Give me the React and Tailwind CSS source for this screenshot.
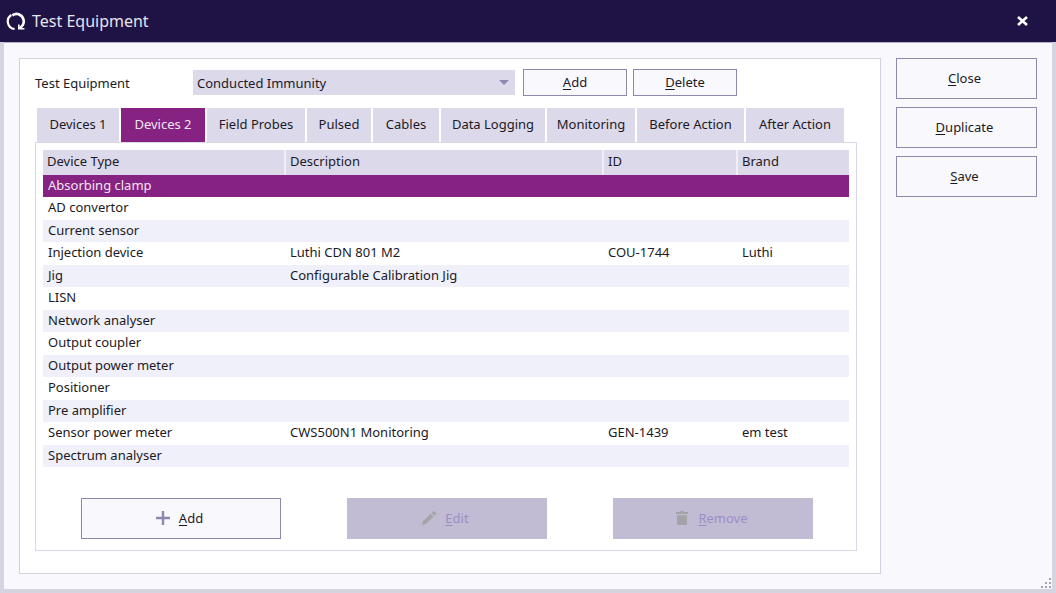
import { useState } from "react";

const tabs = [
  { name: "Devices 1", width: "w-[82px]" },
  { name: "Devices 2", width: "w-[84px]" },
  { name: "Field Probes", width: "w-[98px]" },
  { name: "Pulsed", width: "w-[64px]" },
  { name: "Cables", width: "w-[66px]" },
  { name: "Data Logging", width: "w-[104px]" },
  { name: "Monitoring", width: "w-[88px]" },
  { name: "Before Action", width: "w-[107px]" },
  { name: "After Action", width: "w-[98px]" },
];

const devices = [
  { type: "Absorbing clamp" },
  { type: "AD convertor" },
  { type: "Current sensor" },
  { type: "Injection device", description: "Luthi CDN 801 M2", id: "COU-1744", brand: "Luthi" },
  { type: "Jig", description: "Configurable Calibration Jig" },
  { type: "LISN" },
  { type: "Network analyser" },
  { type: "Output coupler" },
  { type: "Output power meter" },
  { type: "Positioner" },
  { type: "Pre amplifier" },
  { type: "Sensor power meter", description: "CWS500N1 Monitoring", id: "GEN-1439", brand: "em test" },
  { type: "Spectrum analyser" },
];

// Button caption with its access key underlined
function Caption({ text }) {
  return (
    <span>
      <span className="underline underline-offset-2">{text[0]}</span>
      {text.slice(1)}
    </span>
  );
}

function Button({ text, className }) {
  return (
    <button className={`border border-[#8e88ae] bg-[#f8f8fd] pb-0.5 hover:bg-white ${className}`}>
      <Caption text={text} />
    </button>
  );
}

function Logo() {
  return (
    <svg className="h-5 w-5" viewBox="0 0 20 20" fill="none" stroke="#fff">
      <path d="M5.4 4 A7.6 7.6 0 0 0 8.6 18" strokeWidth="2.2" />
      <path d="M6.4 4.4 Q9.4 2.2 12.6 3.2 A7.4 7.4 0 0 1 15.4 15.6 L13.4 17.4" strokeWidth="2.6" />
      <path d="M12.8 13.4 V17.8 H18.4" strokeWidth="1.6" />
    </svg>
  );
}

function PlusIcon() {
  return (
    <svg className="h-4 w-4" viewBox="0 0 16 16" fill="none" stroke="#8e88ae" strokeWidth="2.4">
      <path d="M8 1 V15 M1 8 H15" />
    </svg>
  );
}

function PencilIcon() {
  return (
    <svg className="h-4 w-4" viewBox="0 0 16 16" fill="#a3a3a8">
      <path d="M1 15 L2 11.2 L9.8 3.8 L12.6 6.6 L4.8 14.1 Z" />
      <path d="M10.6 3 L12.3 1.4 Q13 .9 13.7 1.5 L15 2.8 Q15.5 3.5 14.9 4.2 L13.4 5.8 Z" />
    </svg>
  );
}

function TrashIcon() {
  return (
    <svg className="h-4 w-4" viewBox="0 0 16 16" fill="#a3a3a8">
      <path d="M2 2 H6 L6.6 1 H9.4 L10 2 H14 V4 H2 Z" />
      <path d="M3 5.2 H13 V14 Q13 15 12 15 H4 Q3 15 3 14 Z" />
    </svg>
  );
}

export default function App() {
  const [activeTab, setActiveTab] = useState(1);
  const [selected, setSelected] = useState(0);

  return (
    <div className="flex min-h-screen flex-col bg-[#d7d4e2] font-['Noto_Sans','Open_Sans',sans-serif] text-[13px] leading-[18px] text-[#1c1a26]">
      <header className="flex h-[42px] items-center justify-between bg-[#1e1344] pr-7 pl-1.5 text-[#e6e4ee]">
        <div className="flex items-center gap-1.5">
          <Logo />
          <h1 className="text-base">Test Equipment</h1>
        </div>
        <button aria-label="Close window" className="flex h-5 items-center">
          <svg className="h-[10px] w-[11px]" viewBox="0 0 11 10" stroke="#fff" strokeWidth="2.6">
            <path d="M1 1 L10 9 M10 1 L1 9" />
          </svg>
        </button>
      </header>

      <main className="relative mx-1 mb-1 flex flex-1 gap-[15px] border-t border-[#b4b0c6] bg-[#f8f8fd] px-[15px] py-[15px]">
        <section className="flex min-w-0 flex-1 flex-col border border-[#d2d1df] bg-white px-[15px] pt-[10px] pb-[22px]">
          <div className="flex items-center">
            <label htmlFor="equipment" className="w-[158px]">
              Test Equipment
            </label>
            <div className="relative w-[322px]">
              <select id="equipment" className="h-[25px] w-full appearance-none bg-[#dcd9eb] px-1">
                <option>Conducted Immunity</option>
              </select>
              <svg
                className="pointer-events-none absolute top-2.5 right-1.5 h-[5px] w-[10px]"
                viewBox="0 0 10 5"
                fill="#8e88ae"
              >
                <path d="M0 0 H10 L5 5 Z" />
              </svg>
            </div>
            <Button text="Add" className="mr-1.5 ml-2 h-[27px] w-[104px]" />
            <Button text="Delete" className="h-[27px] w-[104px]" />
          </div>

          <div role="tablist" className="mt-3 flex gap-0.5 pl-0.5">
            {tabs.map((tab, index) => (
              <button
                key={tab.name}
                role="tab"
                aria-selected={activeTab === index}
                onClick={() => setActiveTab(index)}
                className={`h-[34px] pb-0.5 whitespace-nowrap ${tab.width} ${
                  activeTab === index ? "bg-[#852282] text-[#f3e6f3]" : "bg-[#dcd9eb]"
                }`}
              >
                {tab.name}
              </button>
            ))}
          </div>

          <div
            role="tabpanel"
            className="mr-2 flex flex-1 flex-col justify-between border border-[#d9d8e4] px-[7px] pt-[7px] pb-[11px]"
          >
            <table className="w-full table-fixed text-left">
              <thead>
                <tr className="h-[25px] bg-[#dcd9eb]">
                  <th className="w-[242px] border-r-2 border-[#f0eff8] px-1 pt-0 pb-1 font-normal">Device Type</th>
                  <th className="w-[318px] border-r-2 border-[#f0eff8] px-1 pt-0 pb-1 font-normal">Description</th>
                  <th className="w-[134px] border-r-2 border-[#f0eff8] px-1 pt-0 pb-1 font-normal">ID</th>
                  <th className="px-1 pt-0 pb-1 font-normal">Brand</th>
                </tr>
              </thead>
              <tbody>
                {devices.map((device, index) => (
                  <tr
                    key={device.type}
                    onClick={() => setSelected(index)}
                    className={`h-[22px] even:h-[23px] ${
                      selected === index ? "bg-[#852282] text-[#f3e6f3]" : "odd:bg-[#eff0f9]"
                    }`}
                  >
                    <td className="pt-0 pr-1 pb-[3px] pl-[5px]">{device.type}</td>
                    <td className="pt-0 pr-1 pb-[3px] pl-[5px]">{device.description}</td>
                    <td className="pt-0 pr-1 pb-[3px] pl-[5px]">{device.id}</td>
                    <td className="pt-0 pr-1 pb-[3px] pl-[5px]">{device.brand}</td>
                  </tr>
                ))}
              </tbody>
            </table>

            <div className="flex justify-between pr-9 pl-[38px]">
              <button className="flex h-[41px] w-[200px] items-center justify-center gap-2 border border-[#8e88ae] bg-[#f8f8fd] pr-1 pb-0.5">
                <PlusIcon />
                <Caption text="Add" />
              </button>
              <button
                disabled
                className="flex h-[41px] w-[200px] items-center justify-center gap-2 bg-[#c1bcd3] pr-1 pb-0.5 text-[#9b8fc6]"
              >
                <PencilIcon />
                <Caption text="Edit" />
              </button>
              <button
                disabled
                className="flex h-[41px] w-[200px] items-center justify-center gap-2 bg-[#c1bcd3] pr-1 pb-0.5 text-[#9b8fc6]"
              >
                <TrashIcon />
                <Caption text="Remove" />
              </button>
            </div>
          </div>
        </section>

        <aside className="flex w-[141px] flex-col gap-2">
          <Button text="Close" className="h-[41px] pr-1" />
          <Button text="Duplicate" className="h-[41px] pr-1" />
          <Button text="Save" className="h-[41px] pr-1" />
        </aside>

        <svg className="absolute right-px bottom-px h-[10px] w-[10px]" viewBox="0 0 10 10" fill="#a5a3ad">
          <path d="M8 0h2v2h-2z M4 4h2v2h-2z M8 4h2v2h-2z M0 8h2v2h-2z M4 8h2v2h-2z M8 8h2v2h-2z" />
        </svg>
      </main>
    </div>
  );
}
